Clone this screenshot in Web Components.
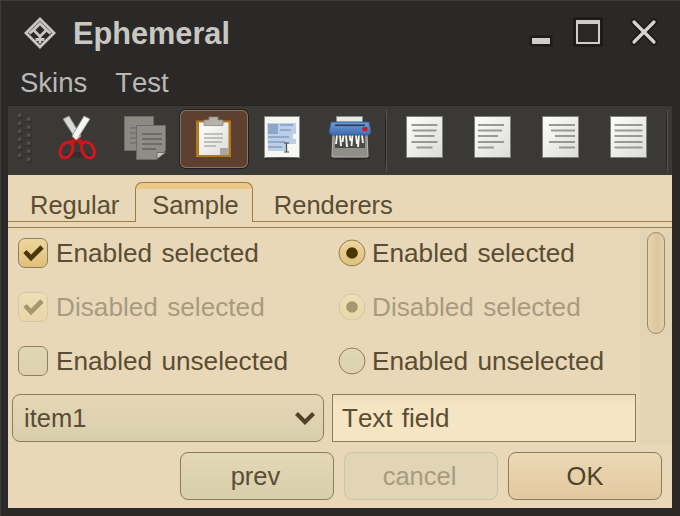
<!DOCTYPE html>
<html>
<head>
<meta charset="utf-8">
<title>Ephemeral</title>
<style>
    html, body { margin: 0; padding: 0; background: #2a2927; }
</style>
</head>
<body>
<x-window>
    <x-titlebar slot="title">Ephemeral</x-titlebar>
    <x-menubar slot="menu"><span>Skins</span><span>Test</span></x-menubar>
    <x-toolbar slot="toolbar">
        <x-grip></x-grip>
        <x-tool>
            <svg viewBox="44 110 68 58" width="68" height="58">
                <ellipse cx="78" cy="155" rx="13" ry="3" fill="#2c2b28" opacity=".7"/>
                <path d="M63 119l6-3 12 20-4 5z" fill="#d8d8d4" stroke="#8d8d88" stroke-width=".8"/>
                <path d="M90 119l-6-3-12 20 4 5z" fill="#f4f4f0" stroke="#8d8d88" stroke-width=".8"/>
                <path d="M75 139l-5 6M78 139l5 6" stroke="#c9141a" stroke-width="4.500" fill="none"/>
                <ellipse cx="66.500" cy="150" rx="5.800" ry="8.500" transform="rotate(28 66.500 150)" fill="none" stroke="#d3161c" stroke-width="3"/>
                <ellipse cx="88" cy="150" rx="5.800" ry="8.500" transform="rotate(-28 88 150)" fill="none" stroke="#d3161c" stroke-width="3"/>
            </svg>
        </x-tool>
        <x-tool>
            <svg viewBox="112 110 68 58" width="68" height="58">
                <rect x="124.500" y="116.500" width="29" height="34" fill="#8b8a82" stroke="#6c6b65"/>
                <path d="M130 128h6M130 133h6M130 138h6M130 143h6" stroke="#73726b" stroke-width="1.600"/>
                <path d="M136.500 125.500h29v25l-9 9h-20z" fill="#8f8e86" stroke="#6c6b65"/>
                <path d="M142 134h20M142 139h20M142 144h20M142 149h14" stroke="#6d6c65" stroke-width="1.800"/>
                <path d="M157 159v-6.500h8.500z" fill="#c9c8c1" stroke="#6c6b65"/>
            </svg>
        </x-tool>
        <x-tool active>
            <svg viewBox="180 110 68 58" width="68" height="58">
                <defs><linearGradient id="pg" x1="0" y1="0" x2="1" y2="1"><stop offset="0" stop-color="#fff"/><stop offset="1" stop-color="#dcdcd8"/></linearGradient></defs>
                <rect x="196" y="120.500" width="35" height="36.500" fill="#b27a1e"/>
                <path d="M199 122.500h29.500v32.500h-29.500z" fill="url(#pg)"/>
                <path d="M204 134h19M204 138h19M204 142h18M204 146h12" stroke="#b0b0ab" stroke-width="1.600"/>
                <path d="M220 155v-7h8.500v7z" fill="#a9a8a2"/>
                <path d="M209 120v-3h9v3h5v5.500h-19v-5.500z" fill="#b5b4ac" stroke="#86857e" stroke-width=".8"/>
            </svg>
        </x-tool>
        <x-tool>
            <svg viewBox="248 110 68 58" width="68" height="58">
                <rect x="264.500" y="116.500" width="35" height="41" fill="#f6f6f4" stroke="#8b8b87"/>
                <path d="M267 123h29v11h-3v5h3v5h-9v7h-19z" fill="#bccfe6"/>
                <rect x="268" y="124" width="10" height="10" fill="#8ba6c8"/>
                <path d="M280 125h13M280 130h11M268 137h21M268 142h17M268 147h14" stroke="#8faaca" stroke-width="1.800"/>
                <path d="M284 143h5M284 152h5M286.500 143v9" stroke="#4c4c4a" stroke-width="1.200"/>
                <ellipse cx="282" cy="158.500" rx="18" ry="1.500" fill="#26251f" opacity=".5"/>
            </svg>
        </x-tool>
        <x-tool>
            <svg viewBox="316 110 68 58" width="68" height="58">
                <defs><linearGradient id="lid" x1="0" y1="0" x2="0" y2="1"><stop offset="0" stop-color="#6e9bd8"/><stop offset="1" stop-color="#3f6cb0"/></linearGradient></defs>
                <ellipse cx="350" cy="158" rx="20" ry="2" fill="#26251f" opacity=".6"/>
                <rect x="336.500" y="116.500" width="26" height="10" fill="#e8e8e4" stroke="#8e8e8a"/>
                <path d="M333 134h34l1 22a1 1 0 0 1-1 1h-34a1 1 0 0 1-1-1z" fill="#8f8e87" stroke="#b8b7b0"/>
                <path d="M335 134h30v14h-30z" fill="#4a4a47"/>
                <path d="M337 135l-1 9M340 135l1 11M343.500 135l-1 7M346 135l1 12M349.500 135l1 6M352.500 135l-1 11M356 135l1 9M359 135l-1 12M362 135l1 8" stroke="#f4f4f2" stroke-width="1.900"/>
                <path d="M331 122h38l2 10-2 3h-38l-2-3z" fill="url(#lid)" stroke="#34588f"/>
                <rect x="362.500" y="127" width="5" height="4" rx="1" fill="#d8161c"/>
                <rect x="335" y="124.500" width="30" height="1.500" fill="#27384f"/>
            </svg>
        </x-tool>
        <x-tool-sep style="margin:0 3px 0 1px"></x-tool-sep>
        <x-tool><x-doc align="center"></x-doc></x-tool>
        <x-tool><x-doc align="left"></x-doc></x-tool>
        <x-tool><x-doc align="right"></x-doc></x-tool>
        <x-tool><x-doc align="fill"></x-doc></x-tool>
        <x-tool-sep style="margin-left:4px"></x-tool-sep>
    </x-toolbar>
    <x-tabs slot="tabs">
        <x-tab style="--pl:22px;--pr:16px">Regular</x-tab>
        <x-tab selected style="--pl:16px;--pr:13px">Sample</x-tab>
        <x-tab style="--pl:21px;--pr:16px">Renderers</x-tab>
    </x-tabs>
    <x-scroll-pane slot="body">
        <x-form>
            <x-check checked>Enabled selected</x-check>
            <x-radio checked>Enabled selected</x-radio>
            <x-check checked disabled>Disabled selected</x-check>
            <x-radio checked disabled>Disabled selected</x-radio>
            <x-check>Enabled unselected</x-check>
            <x-radio>Enabled unselected</x-radio>
            <x-combo slot="combo">item1</x-combo>
            <x-field slot="field">Text field</x-field>
        </x-form>
    </x-scroll-pane>
    <x-buttons slot="buttons">
        <x-btn>prev</x-btn>
        <x-btn disabled>cancel</x-btn>
        <x-btn default>OK</x-btn>
    </x-buttons>
</x-window>

<script>
    // small helper, every element is just a shadow root with a style and some markup
    const define = (name, html) => {
        customElements.define(name, class extends HTMLElement {
            connectedCallback() {
                if (this.shadowRoot) return;
                this.attachShadow({ mode: 'open' });
                this.shadowRoot.innerHTML = typeof html === 'function' ? html(this) : html;
            }
        });
    };

    define('x-window', `
        <style>
            :host {
                display: flex;
                flex-direction: column;
                box-sizing: border-box;
                width: 680px;
                height: 516px;
                background: #2a2927;
                border-top: 1px solid #3d3c3a;
                border-left: 1px solid #3d3c3a;
                font-family: "Liberation Sans", Arial, sans-serif;
                font-kerning: none;
            }
            .body {
                flex: 1;
                margin: 0 8px 8px 7px;
                display: flex;
                flex-direction: column;
                background: #e8d8b8;
            }
        </style>
        <slot name="title"></slot>
        <slot name="menu"></slot>
        <slot name="toolbar"></slot>
        <div class="body">
            <slot name="tabs"></slot>
            <slot name="body"></slot>
            <slot name="buttons"></slot>
        </div>
    `);

    define('x-titlebar', `
        <style>
            :host {
                display: flex;
                align-items: center;
                height: 65px;
                padding: 0 22px 0 23px;
                color: #c9c7c3;
            }
            .name { font-size: 30.7px; font-weight: 700; margin: 2px 0 0 17px; }
            .controls { margin-left: auto; display: flex; align-items: center; margin-top: 1px; }
        </style>
        <svg width="32" height="32" viewBox="0 0 32 32">
            <g fill="none" stroke="#c9c7c3" stroke-width="2.800" stroke-linejoin="miter">
                <path d="M16 2L30 16L16 30L2 16z"/>
                <path d="M16 6.500L9.500 13L16 19.500L22.500 13z"/>
                <path d="M5.500 16.500L9.500 13M26.500 16.500L22.500 13M16 19.500V26.500M11.500 22.500H20.500"/>
            </g>
        </svg>
        <span class="name"><slot></slot></span>
        <span class="controls">
            <svg width="132" height="34" viewBox="0 0 132 34">
                <g fill="none" stroke="#1d1c1b">
                    <rect x="4" y="19" width="22" height="10" fill="#1d1c1b"/>
                    <rect x="49" y="2" width="26" height="26" stroke-width="4"/>
                    <path d="M108 5L128 25M128 5L108 25" stroke-width="7" stroke-linecap="round"/>
                </g>
                <rect x="6" y="21" width="18" height="6" fill="#cfcdc9"/>
                <path d="M51 4h22v22h-22z" fill="none" stroke="#cfcdc9" stroke-width="2"/>
                <rect x="50" y="3" width="24" height="4" fill="#cfcdc9"/>
                <path d="M108 5L128 25M128 5L108 25" fill="none" stroke="#d6d4d0" stroke-width="3.200" stroke-linecap="round"/>
            </svg>
        </span>
    `);

    define('x-menubar', `
        <style>
            :host {
                display: flex;
                gap: 28px;
                height: 40px;
                padding: 0 20px 0 19px;
                align-items: flex-start;
                font-size: 27.5px;
                line-height: 34px;
                color: #bab8b4;
            }
        </style>
        <slot></slot>
    `);

    define('x-toolbar', `
        <style>
            :host {
                display: flex;
                box-sizing: border-box;
                height: 70px;
                margin: 0 8px 0 7px;
                padding-top: 4px;
                background: #3a3935;
                border-top: 1px solid #242321;
            }
        </style>
        <slot></slot>
    `);

    define('x-grip', `
        <style>
            :host { display: block; width: 36px; height: 58px; }
            svg { display: block; }
        </style>
        <svg width="36" height="58" viewBox="8 110 36 58">
            <defs><radialGradient id="d" cx=".4" cy=".3" r=".8"><stop offset="0" stop-color="#62605b"/><stop offset="1" stop-color="#201f1d"/></radialGradient></defs>
            ${[116, 124, 132, 140, 148, 156].map(y =>
                `<circle cx="20" cy="${y}" r="2.700" fill="url(#d)"/><circle cx="29" cy="${y + 4}" r="2.700" fill="url(#d)"/>`
            ).join('')}
        </svg>
    `);

    define('x-tool', (el) => `
        <style>
            :host {
                display: flex;
                align-items: center;
                justify-content: center;
                box-sizing: border-box;
                width: 68px;
                height: 58px;
                border-radius: 6px;
                ${el.hasAttribute('active') ? `
                    background: #5e4030;
                    box-shadow: inset 0 0 0 1px #8a7360, 0 0 0 1px #211f1d;
                ` : ''}
            }
            ::slotted(svg) { display: block; }
        </style>
        <slot></slot>
    `);

    define('x-tool-sep', `
        <style>
            :host {
                display: block;
                width: 2px;
                height: 62px;
                background: linear-gradient(#3a3935, #23221f 20%, #23221f 80%, #3a3935);
                border-right: 1px solid #55534e;
                box-sizing: border-box;
            }
        </style>
    `);

    define('x-doc', (el) => {
        const widths = [26, 24, 20, 26, 16];
        const align = el.getAttribute('align');
        const ys = [9, 14.5, 20, 26, 31.5];
        const lines = widths.map((w, i) => {
            if (align === 'fill') w = 28;
            const x = align === 'left' ? 4 : align === 'right' ? 33 - w : (37 - w) / 2;
            return `<rect x="${x}" y="${ys[i] - 1}" width="${w}" height="2" fill="#989896"/>`;
        }).join('');
        const id = 'g' + align;
        return `
            <style>
                :host { display: block; width: 37px; height: 42px; margin-bottom: 4px; }
                svg { display: block; overflow: visible; }
            </style>
            <svg width="37" height="42" viewBox="0 0 37 42">
                <defs><linearGradient id="${id}" x1="0" y1="0" x2="1" y2="1"><stop offset="0" stop-color="#fdfdfc"/><stop offset="1" stop-color="#dcdcd8"/></linearGradient></defs>
                <rect x=".5" y=".5" width="36" height="41" fill="url(#${id})" stroke="#7f7f7b"/>
                ${lines}
            </svg>
        `;
    });

    define('x-tabs', `
        <style>
            :host {
                display: flex;
                box-sizing: border-box;
                height: 47px;
                padding-top: 7px;
                border-bottom: 1px solid #a17c40;
                color: #5a4d33;
            }
        </style>
        <slot></slot>
    `);

    define('x-tab', (el) => `
        <style>
            :host {
                display: block;
                box-sizing: border-box;
                height: 40px;
                padding: 7px var(--pr) 0 var(--pl);
                font-size: 25.5px;
                line-height: 32px;
                ${el.hasAttribute('selected') ? `
                    padding-top: 6px;
                    border: 1px solid #a17c40;
                    border-bottom: 0;
                    border-radius: 7px 7px 0 0;
                    background: linear-gradient(#e9c888 0 6px, #e8d8b8 6px);
                ` : ''}
            }
        </style>
        <slot></slot>
    `);

    define('x-scroll-pane', `
        <style>
            :host {
                display: flex;
                height: 216px;
                margin-top: 5px;
                border-top: 1px solid #a17c40;
                box-sizing: content-box;
            }
            .view { width: 632px; }
            .bar {
                width: 32px;
                box-sizing: border-box;
                padding: 4px 7px 0;
                background: #e3d4b4;
            }
            .thumb {
                box-sizing: border-box;
                height: 102px;
                border: 1px solid #9a8a68;
                border-radius: 9px;
                background: linear-gradient(90deg, #e6d4ae, #dcc6a0 60%, #e2d0aa);
            }
        </style>
        <div class="view"><slot></slot></div>
        <div class="bar"><div class="thumb"></div></div>
    `);

    define('x-form', `
        <style>
            :host { display: block; padding: 10px 4px 0 4px; }
            .opts {
                display: grid;
                grid-template-columns: 320px 1fr;
                row-gap: 24px;
                padding-left: 6px;
            }
            .inputs {
                display: grid;
                grid-template-columns: 312px 304px;
                column-gap: 8px;
                margin-top: 18px;
            }
        </style>
        <div class="opts"><slot></slot></div>
        <div class="inputs"><slot name="combo"></slot><slot name="field"></slot></div>
    `);

    const optionStyle = (gap, disabled) => `
        :host {
            display: flex;
            align-items: center;
            gap: ${gap}px;
            height: 30px;
            font-size: 26.2px;
            word-spacing: 2px;
            color: ${disabled ? '#a89b7f' : '#5a4d33'};
        }
        svg { display: block; flex: none; }
    `;

    define('x-check', (el) => {
        const on = el.hasAttribute('checked');
        const off = el.hasAttribute('disabled');
        const top = off ? '#efdfb8' : on ? '#eed69e' : '#e2d7b4';
        const bottom = off ? '#e9d6a8' : on ? '#dfc07a' : '#dcd1ac';
        const id = off ? 'cd' : on ? 'cn' : 'cu';
        return `
            <style>${optionStyle(8, off)}</style>
            <svg width="30" height="30" viewBox="0 0 30 30">
                <defs><linearGradient id="${id}" x1="0" y1="0" x2="0" y2="1"><stop offset="0" stop-color="${top}"/><stop offset="1" stop-color="${bottom}"/></linearGradient></defs>
                <rect x=".5" y=".5" width="29" height="29" rx="6.500" fill="url(#${id})" stroke="${off ? '#d6c8a4' : '#8f7f5c'}"/>
                ${on ? `<path d="M7 13.500L13 20L24 9" fill="none" stroke="${off ? '#a8966c' : '#493508'}" stroke-width="4.600"/>` : ''}
            </svg>
            <span><slot></slot></span>
        `;
    });

    define('x-radio', (el) => {
        const on = el.hasAttribute('checked');
        const off = el.hasAttribute('disabled');
        const top = off ? '#efdfb8' : on ? '#eed69e' : '#e2d7b4';
        const bottom = off ? '#e9d6a8' : on ? '#dfc07a' : '#dcd1ac';
        const id = off ? 'rd' : on ? 'rn' : 'ru';
        return `
            <style>${optionStyle(6, off)}</style>
            <svg width="28" height="28" viewBox="0 0 28 28">
                <defs><linearGradient id="${id}" x1="0" y1="0" x2="0" y2="1"><stop offset="0" stop-color="${top}"/><stop offset="1" stop-color="${bottom}"/></linearGradient></defs>
                <circle cx="14" cy="14" r="13" fill="url(#${id})" stroke="${off ? '#d6c8a4' : '#8f7f5c'}"/>
                ${on ? `<circle cx="14" cy="14" r="5.800" fill="${off ? '#a8966c' : '#493508'}"/>` : ''}
            </svg>
            <span><slot></slot></span>
        `;
    });

    define('x-combo', `
        <style>
            :host {
                display: flex;
                align-items: center;
                box-sizing: border-box;
                height: 48px;
                padding: 0 7px 0 11px;
                border: 1px solid #8a7d5e;
                border-radius: 8px;
                background: linear-gradient(#e5d7b6, #d9ceab);
                font-size: 25.5px;
                color: #5a4d33;
            }
            svg { margin-left: auto; }
        </style>
        <span><slot></slot></span>
        <svg width="22" height="16" viewBox="0 0 22 16">
            <path d="M2.500 3.500L11 12L19.500 3.500" fill="none" stroke="#4f4227" stroke-width="4.200"/>
        </svg>
    `);

    define('x-field', `
        <style>
            :host {
                display: flex;
                align-items: center;
                box-sizing: border-box;
                height: 48px;
                padding: 0 9px;
                border: 1px solid #8a7d5e;
                background: linear-gradient(#ebdcba, #f5e5c3 22%);
                font-size: 26px;
                word-spacing: 2px;
                color: #5a4d33;
            }
        </style>
        <slot></slot>
    `);

    define('x-buttons', `
        <style>
            :host {
                display: flex;
                justify-content: flex-end;
                gap: 10px;
                padding: 8px 10px 8px 0;
            }
        </style>
        <slot></slot>
    `);

    define('x-btn', (el) => {
        const off = el.hasAttribute('disabled');
        const main = el.hasAttribute('default');
        return `
            <style>
                :host {
                    display: flex;
                    align-items: center;
                    justify-content: center;
                    box-sizing: border-box;
                    width: 154px;
                    height: 48px;
                    padding-right: ${main ? 0 : 3}px;
                    border: 1px solid ${off ? '#cfc3a6' : main ? '#8f7b58' : '#8a7d5e'};
                    border-radius: 8px;
                    background: ${off ? '#e2d5b5' : main ? 'linear-gradient(#ecd9b6, #e2c89f)' : 'linear-gradient(#e4d8b6, #d8ceaa)'};
                    font-size: 25.5px;
                    color: ${off ? '#a89b7f' : main ? '#4f4227' : '#5a4d33'};
                }
            </style>
            <slot></slot>
        `;
    });
</script>
</body>
</html>
